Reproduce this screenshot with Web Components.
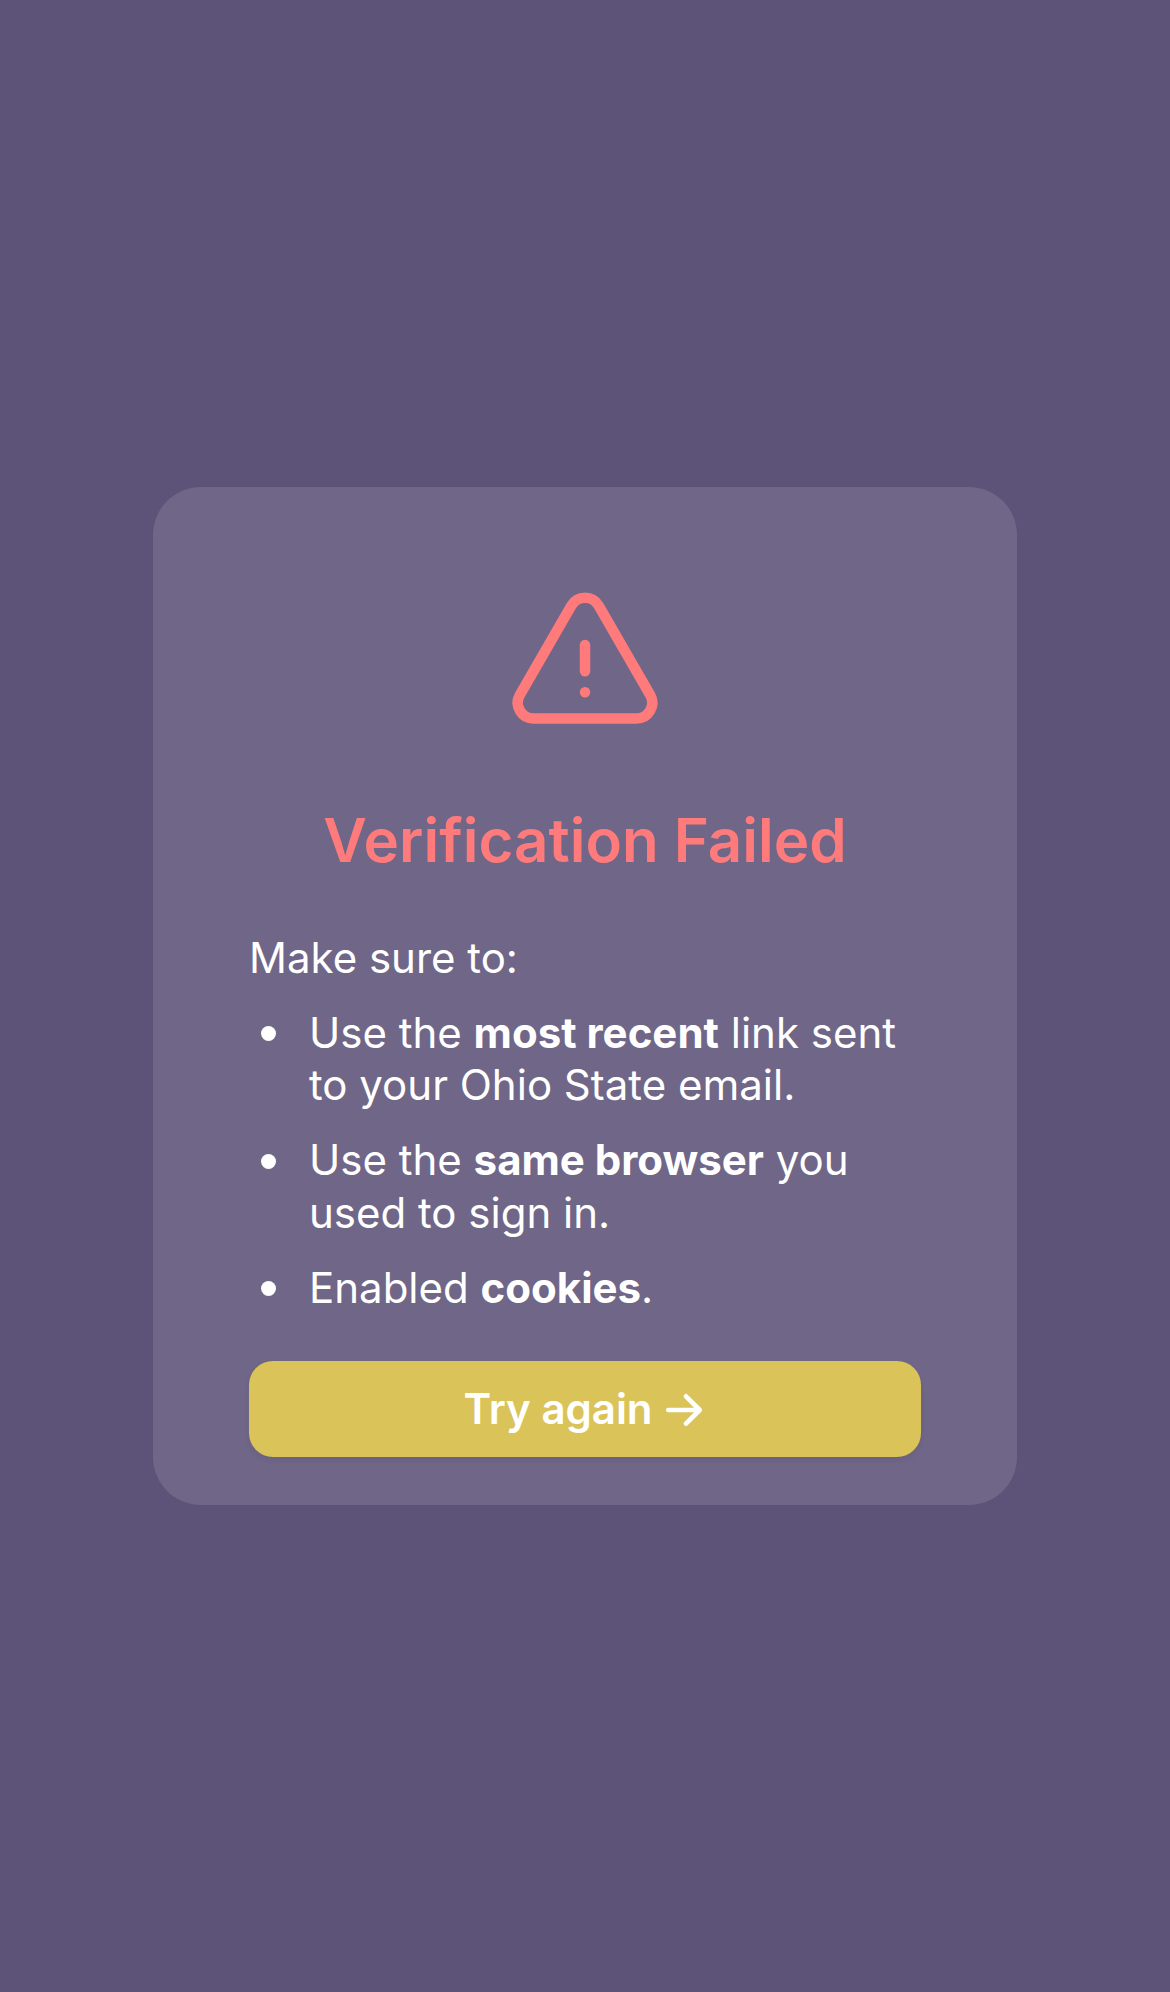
<!DOCTYPE html>
<html lang="en">
<head>
<meta charset="utf-8">
<title>Verification Failed</title>
<style>
html, body { margin: 0; height: 100%; }
body { background: #5d5378; color: #fff; font-family: Inter, "Liberation Sans", sans-serif; font-size: 42px; line-height: 52.5px; font-variation-settings: "opsz" 14; }
</style>
</head>
<body>
<verify-page>
  <status-card>
    <warning-icon slot="icon"></warning-icon>
    <span slot="title">Verification Failed</span>
    <check-list>
      <span slot="intro">Make sure to:</span>
      <check-item>Use the <b>most recent</b> link sent to your Ohio State email.</check-item>
      <check-item>Use the <b>same browser</b> you used to sign in.</check-item>
      <check-item>Enabled <b>cookies</b>.</check-item>
    </check-list>
    <action-button slot="action">Try again</action-button>
  </status-card>
</verify-page>
<script>
function define(name, html) {
  const t = document.createElement('template');
  t.innerHTML = html;
  customElements.define(name, class extends HTMLElement {
    constructor() {
      super();
      this.attachShadow({ mode: 'open' }).append(t.content.cloneNode(true));
    }
  });
}
define('verify-page', `<style>
:host { display: flex; min-height: 100%; align-items: center; justify-content: center; }
</style><slot></slot>`);
define('status-card', `<style>
:host { display: flex; flex-direction: column; box-sizing: border-box; width: 864px; height: 1018px; padding: 95px 96px 48px; border-radius: 48px; background: #6f6688; }
.icon { display: flex; justify-content: center; }
h1 { margin: 53px 0 53.75px; text-align: center; color: #ff7b7b; font-size: 60px; line-height: 75px; font-weight: 600; }
.action { margin-top: auto; }
</style>
<div class="icon"><slot name="icon"></slot></div>
<h1><slot name="title"></slot></h1>
<slot></slot>
<div class="action"><slot name="action"></slot></div>`);
define('warning-icon', `<style>
:host { display: block; width: 168px; height: 168px; color: #ff7b7b; }
svg { display: block; }
</style>
<svg width="168" height="168" viewBox="0 0 24 24" fill="none" stroke="currentColor" stroke-width="1.5" stroke-linecap="round" stroke-linejoin="round"><path d="M12 9v3.75m-9.303 3.376c-.866 1.5.217 3.374 1.948 3.374h14.71c1.73 0 2.813-1.874 1.948-3.374L13.949 3.378c-.866-1.5-3.032-1.5-3.898 0L2.697 16.126ZM12 15.75h.007v.008H12v-.008Z"/></svg>`);
define('check-list', `<style>
:host { display: flex; flex-direction: column; gap: 22.5px; }
</style><slot name="intro"></slot><slot></slot>`);
define('check-item', `<style>
:host { display: flex; padding-left: 11.5px; }
.dot { flex: none; width: 15px; height: 15px; margin: 19.5px 33.5px 0 0; border-radius: 50%; background: #fff; }
</style><span class="dot"></span><div><slot></slot></div>`);
define('action-button', `<style>
:host { display: block; }
button { all: unset; box-sizing: border-box; display: flex; width: 100%; height: 96px; align-items: center; justify-content: center; gap: 12px; border-radius: 24px; background: #dac359; color: #fff; font-weight: 600; box-shadow: 0 3px 6px rgba(0,0,0,.05); }
svg { flex: none; }
</style>
<button type="button"><span><slot></slot></span>
<svg width="42" height="42" viewBox="0 0 42 42" fill="none" stroke="currentColor" stroke-width="4.7" stroke-linecap="round" stroke-linejoin="round"><path d="M3.3 22H34.7M21 8.3 34.7 22 21 35.7"/></svg></button>`);
</script>
</body>
</html>
